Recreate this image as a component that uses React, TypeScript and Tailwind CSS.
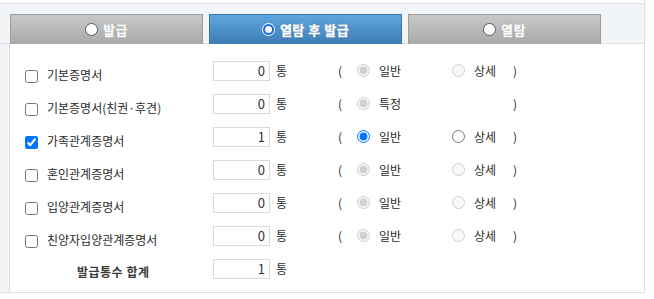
import { useState } from 'react';

type Row = {
  name: string;
  count: number;
  checked: boolean;
  kind: 'normal' | 'special';
};

const rows: Row[] = [
  { name: '기본증명서', count: 0, checked: false, kind: 'normal' },
  { name: '기본증명서(친권·후견)', count: 0, checked: false, kind: 'special' },
  { name: '가족관계증명서', count: 1, checked: true, kind: 'normal' },
  { name: '혼인관계증명서', count: 0, checked: false, kind: 'normal' },
  { name: '입양관계증명서', count: 0, checked: false, kind: 'normal' },
  { name: '친양자입양관계증명서', count: 0, checked: false, kind: 'normal' },
];

const tabs = ['발급', '열람 후 발급', '열람'];

function TabRadio({ active }: { active: boolean }) {
  if (active) {
    return (
      <span className="inline-block w-[13px] h-[13px] rounded-full bg-white p-[1px]">
        <span className="block w-full h-full rounded-full border-[2px] border-[#1467e6] bg-white" />
      </span>
    );
  }
  return <span className="inline-block w-[13px] h-[13px] rounded-full border border-[#5a5a5a] bg-white" />;
}

export default function App() {
  const [tab, setTab] = useState(1);

  return (
    <div
      className="w-[654px] h-[299px] bg-white text-[#2b2b2b] text-[12px] overflow-hidden"
      style={{ fontFamily: '"Noto Sans CJK KR", "Noto Sans", sans-serif' }}>
      <div className="w-[645px] border-r border-[#dcdfe3] pt-[3px]">
        <header className="flex gap-[6px] pl-[10px] pt-[10px] h-[41px] bg-[#f2f5f8] border-t border-b border-[#dcdfe3]">
          {tabs.map((label, i) => {
            const active = i === tab;
            return (
              <button
                key={label}
                onClick={() => setTab(i)}
                className={
                  active
                    ? 'w-[193px] h-[30px] flex items-center justify-center gap-[5px] border border-b-0 border-[#3a76ad] bg-gradient-to-b from-[#5ea6df] to-[#3e7db6] text-white text-[13px] font-bold tracking-[0.5px] [-webkit-text-stroke:0.4px_white] [text-shadow:0_0_1px_rgba(0,0,0,0.6)]'
                    : 'w-[193px] h-[30px] flex items-center justify-center gap-[5px] border border-b-0 border-[#9c9c9c] bg-gradient-to-b from-[#c8c8c8] to-[#a9a9a9] text-white text-[13px] font-bold tracking-[0.5px] [-webkit-text-stroke:0.4px_white] [text-shadow:0_0_1px_rgba(0,0,0,0.6)]'
                }>
                <TabRadio active={active} />
                <span>{label}</span>
              </button>
            );
          })}
        </header>

        <div className="flex h-[249px] border-b border-[#dcdfe3]">
          <div className="w-[9px] bg-[#f2f5f8]" />
          <section className="flex-1 border-l border-[#dcdfe3] pl-[15px] pt-[10px]">
            {rows.map((row, i) => {
              const enabled = row.checked;
              return (
                <div key={row.name} className="flex items-center h-[33px]">
                  <label className="w-[188px] flex items-center pt-[9px]">
                    <input
                      type="checkbox"
                      defaultChecked={row.checked}
                      className="m-0 w-[13px] h-[13px] translate-y-[1px]"
                    />
                    <span className="ml-[9px] whitespace-nowrap">{row.name}</span>
                  </label>
                  <input
                    type="text"
                    readOnly
                    value={row.count}
                    className="w-[57px] h-[20px] border border-[#dadada] text-right pr-[4px] text-[13px] text-[#333] outline-none"
                  />
                  <span className="w-[68px] pl-[6px]">통</span>
                  <span className="w-[19px]">(</span>
                  <input
                    type="radio"
                    name={`type-${i}`}
                    defaultChecked
                    disabled={!enabled}
                    className="m-0 w-[13px] h-[13px]"
                  />
                  <span className="w-[82px] pl-[9px]">{row.kind === 'special' ? '특정' : '일반'}</span>
                  {row.kind === 'special' ? (
                    <>
                      <span className="w-[13px]" />
                      <span className="w-[48px]" />
                    </>
                  ) : (
                    <>
                      <input
                        type="radio"
                        name={`type-${i}`}
                        disabled={!enabled}
                        className="m-0 w-[13px] h-[13px]"
                      />
                      <span className="w-[48px] pl-[9px]">상세</span>
                    </>
                  )}
                  <span>)</span>
                </div>
              );
            })}
            <div className="flex items-center h-[33px]">
              <span className="w-[188px] pl-[52px] pt-[6px] font-semibold tracking-[0.5px] text-[#3a3a3a]">
                발급통수 합계
              </span>
              <input
                type="text"
                readOnly
                value={1}
                className="w-[57px] h-[20px] border border-[#dadada] text-right pr-[4px] text-[13px] text-[#333] outline-none"
              />
              <span className="pl-[6px]">통</span>
            </div>
          </section>
        </div>
      </div>
    </div>
  );
}
